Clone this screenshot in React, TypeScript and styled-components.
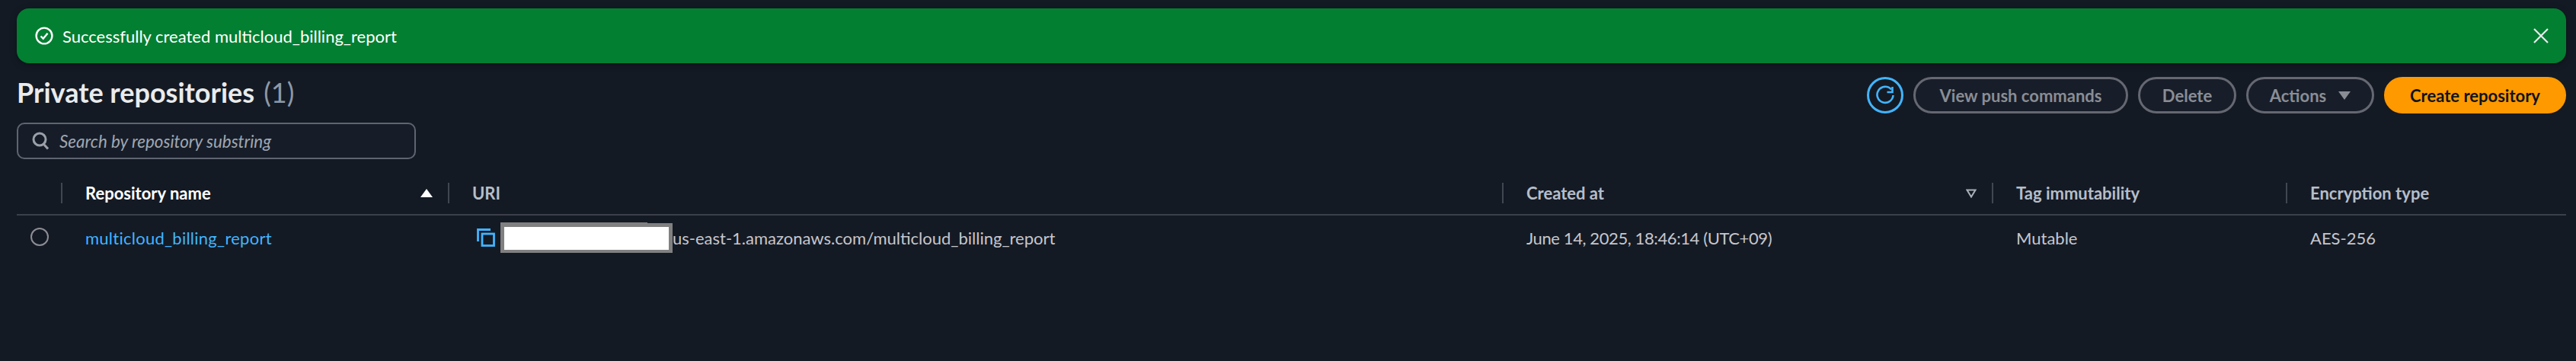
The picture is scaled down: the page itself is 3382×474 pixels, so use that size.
import React from 'react';
import styled, { createGlobalStyle } from 'styled-components';

const GlobalStyle = createGlobalStyle`
  html, body {
    margin: 0;
    padding: 0;
    background: #141a24;
  }
  body {
    font-family: "Lato", "Open Sans", sans-serif;
    -webkit-font-smoothing: antialiased;
  }
`;

const Page = styled.div`
  width: 3382px;
  height: 474px;
  box-sizing: border-box;
  padding: 11px 13px 0 22px;
  overflow: hidden;
  background: #141a24;
`;

const Flash = styled.div`
  height: 72px;
  box-sizing: border-box;
  display: flex;
  align-items: center;
  justify-content: space-between;
  padding: 0 22px 0 24px;
  background: #037f32;
  border-radius: 16px;
  color: #ffffff;
  box-shadow: 0 2px 8px rgba(0, 0, 0, 0.35);
`;

const FlashText = styled.div`
  display: flex;
  align-items: center;
  gap: 12px;
  font-size: 22px;
`;

const HeaderRow = styled.div`
  display: flex;
  justify-content: space-between;
  margin-top: 18px;
`;

const HeaderLeft = styled.div`
  display: flex;
  flex-direction: column;
  gap: 19px;
`;

const Title = styled.h1`
  margin: 0;
  height: 41px;
  font-size: 36px;
  line-height: 41px;
  font-weight: 700;
  color: #e9ebed;
`;

const Count = styled.span`
  margin-left: 12px;
  font-weight: 400;
  color: #8d99a8;
`;

const Search = styled.div`
  width: 524px;
  height: 48px;
  box-sizing: border-box;
  display: flex;
  align-items: center;
  gap: 14px;
  padding-left: 18px;
  background: #161d29;
  border: 2px solid #5f6570;
  border-radius: 10px;
  color: #a0a7b1;
  font-size: 22.4px;
  font-style: italic;
`;

const Actions = styled.div`
  display: flex;
  align-items: center;
  gap: 13px;
  height: 48px;
`;

const RefreshButton = styled.div`
  width: 48px;
  height: 48px;
  box-sizing: border-box;
  display: flex;
  align-items: center;
  justify-content: center;
  border: 3px solid #42b4ff;
  border-radius: 50%;
  color: #42b4ff;
`;

const Pill = styled.div<{ $width: number }>`
  width: ${({ $width }) => $width}px;
  height: 48px;
  box-sizing: border-box;
  display: flex;
  align-items: center;
  justify-content: center;
  gap: 16px;
  background: #171d29;
  border: 3px solid #656871;
  border-radius: 24px;
  color: #8a8d94;
  font-size: 22px;
  font-weight: 700;
`;

const PrimaryPill = styled(Pill)`
  background: #ff9900;
  border-color: #ff9900;
  color: #0f141a;
`;

const Caret = styled.span<{ $up?: boolean; $color: string; $size: number }>`
  display: block;
  width: 0;
  height: 0;
  border-left: ${({ $size }) => $size}px solid transparent;
  border-right: ${({ $size }) => $size}px solid transparent;
  ${({ $up, $color, $size }) =>
    $up
      ? `border-bottom: ${$size * 1.4}px solid ${$color};`
      : `border-top: ${$size * 1.4}px solid ${$color};`}
`;

const OutlineCaret = styled.span`
  display: block;
  color: #a9b0b8;
  line-height: 0;
`;

const TableGrid = styled.div`
  display: grid;
  grid-template-columns: 58px 508px 1384px 643px 386px 368px;
  margin-top: 31px;
  width: 3347px;
`;

const HeadCell = styled.div<{ $active?: boolean; $noRule?: boolean }>`
  height: 27px;
  box-sizing: border-box;
  padding: 0 20px 0 30px;
  display: flex;
  align-items: center;
  justify-content: space-between;
  border-left: ${({ $noRule }) => ($noRule ? 'none' : '2px solid #414750')};
  font-size: 22px;
  font-weight: 700;
  line-height: 27px;
  color: ${({ $active }) => ($active ? '#ffffff' : '#b6bec9')};
`;

const HeadRule = styled.div`
  grid-column: 1 / -1;
  height: 2px;
  margin-top: 14px;
  background: #3b3f4a;
`;

const BodyCell = styled.div<{ $tracking?: number }>`
  height: 58px;
  display: flex;
  align-items: center;
  padding-left: 32px;
  font-size: 22px;
  letter-spacing: ${({ $tracking }) => $tracking ?? 0}px;
  color: #c6c6cd;
`;

const RadioCell = styled.div`
  height: 56px;
  display: flex;
  align-items: center;
  padding-left: 18px;
`;

const Radio = styled.span`
  width: 24px;
  height: 24px;
  box-sizing: border-box;
  border: 2px solid #8d8d94;
  border-radius: 50%;
`;

const RepoLink = styled.a`
  color: #42b4ff;
  text-decoration: none;
`;

const CopyIcon = styled.span`
  display: flex;
  color: #42b4ff;
  margin-left: 6px;
  margin-right: 7px;
`;

const Redaction = styled.span`
  position: relative;
  display: block;
  width: 216px;
  height: 30px;
  background: #ffffff;
  border-style: solid;
  border-color: #808080;
  border-width: 5px 5px 4px 5px;
  flex: none;
  &::before {
    content: '';
    position: absolute;
    left: -5px;
    top: -6px;
    width: 193px;
    height: 1px;
    background: #808080;
  }
`;

const App: React.FC = () => {
  return (
    <Page>
      <GlobalStyle />
      <Flash>
        <FlashText>
          <svg width="24" height="24" viewBox="0 0 24 24" fill="none" stroke="currentColor" strokeWidth="2.4">
            <circle cx="12" cy="12" r="10.4" />
            <path d="M7.5 12.5l3.2 3.2 5.8-7" />
          </svg>
          Successfully created multicloud_billing_report
        </FlashText>
        <svg width="22" height="22" viewBox="0 0 22 22" fill="none" stroke="#e9ebed" strokeWidth="2.2">
          <path d="M2 2l18 18M20 2L2 20" />
        </svg>
      </Flash>

      <HeaderRow>
        <HeaderLeft>
          <Title>
            Private repositories<Count>(1)</Count>
          </Title>
          <Search>
            <svg width="22" height="24" viewBox="0 0 22 24" fill="none" stroke="#9ba0a8" strokeWidth="3">
              <circle cx="10" cy="10" r="8" />
              <path d="M15.5 16.5l5.5 6" />
            </svg>
            Search by repository substring
          </Search>
        </HeaderLeft>
        <Actions>
          <RefreshButton>
            <svg width="26" height="26" viewBox="0 0 26 26" fill="none" stroke="currentColor" strokeWidth="2.6">
              <path d="M21 5.5A10.5 10.5 0 1 0 23.5 13" />
              <path d="M22.5 2v7h-7" />
            </svg>
          </RefreshButton>
          <Pill $width={282}>View push commands</Pill>
          <Pill $width={129}>Delete</Pill>
          <Pill $width={168}>
            Actions
            <Caret $color="#8a8d94" $size={8} />
          </Pill>
          <PrimaryPill $width={239}>Create repository</PrimaryPill>
        </Actions>
      </HeaderRow>

      <TableGrid>
        <HeadCell $noRule />
        <HeadCell $active>
          Repository name
          <Caret $up $color="#ffffff" $size={8} />
        </HeadCell>
        <HeadCell>URI</HeadCell>
        <HeadCell>
          Created at
          <OutlineCaret>
            <svg width="14" height="12" viewBox="0 0 14 12" fill="none" stroke="currentColor" strokeWidth="2">
              <path d="M1.5 1.5h11L7 10.5z" />
            </svg>
          </OutlineCaret>
        </HeadCell>
        <HeadCell>Tag immutability</HeadCell>
        <HeadCell>Encryption type</HeadCell>
        <HeadRule />

        <RadioCell>
          <Radio />
        </RadioCell>
        <BodyCell $tracking={0.25}>
          <RepoLink href="#">multicloud_billing_report</RepoLink>
        </BodyCell>
        <BodyCell>
          <CopyIcon>
            <svg width="24" height="24" viewBox="0 0 24 24" fill="none" stroke="currentColor" strokeWidth="2.8">
              <path d="M1.5 17V1.5H18" />
              <rect x="7" y="7" width="15.5" height="15.5" />
            </svg>
          </CopyIcon>
          <Redaction />
          us-east-1.amazonaws.com/multicloud_billing_report
        </BodyCell>
        <BodyCell $tracking={-0.4}>June 14, 2025, 18:46:14 (UTC+09)</BodyCell>
        <BodyCell>Mutable</BodyCell>
        <BodyCell>AES-256</BodyCell>
      </TableGrid>
    </Page>
  );
};

export default App;
